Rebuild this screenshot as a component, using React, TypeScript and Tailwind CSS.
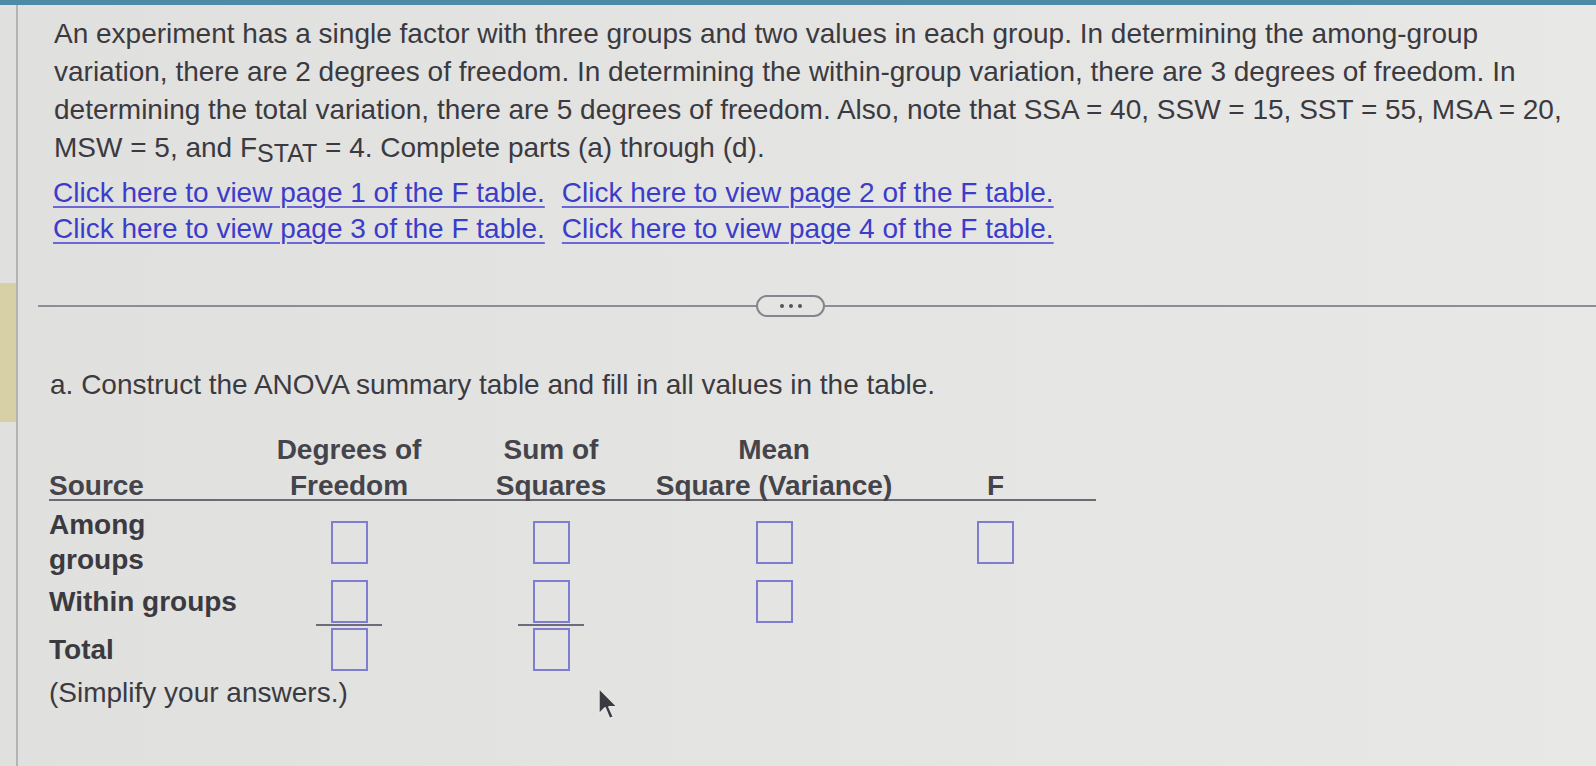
import React from "react";

// small answer box used in the ANOVA table
const AnswerBox = () => (
  <span className="block w-[37px] h-[43px] border-2 border-[#7f7dd2]" />
);

const FractionCell = () => (
  <div className="flex h-full flex-col items-center justify-end">
    <AnswerBox />
    <span className="mt-[1px] block h-[2px] w-[66px] bg-[#6f6b78]" />
  </div>
);

const HeaderCell = ({ top, bottom }: { top: string; bottom: string }) => (
  <div className="text-center">
    <div className="leading-[36px]">{top}</div>
    <div className="mt-[5px] leading-[26px]">{bottom}</div>
  </div>
);

const App: React.FC = () => {
  return (
    <div
      className="relative flex h-[766px] w-full flex-col overflow-hidden bg-linear-to-r from-[#e0e0de] to-[#e8e8e6] text-[#3b3a41]"
      style={{ fontFamily: '"Liberation Sans", Arial, sans-serif' }}
    >
      {/* top bar */}
      <div className="h-[5px] w-full bg-[#4d8aa6]" />

      <div className="flex flex-1">
        {/* left gutter */}
        <div className="flex w-[16px] flex-col">
          <div className="h-[278px]" />
          <div className="h-[139px] bg-[#d7cfa6]" />
        </div>
        <div className="w-[2px] bg-[#b4b4b6]" />

        {/* content */}
        <div className="flex-1">
          <p className="mt-[10px] pl-[36px] text-[28px] leading-[38px] whitespace-nowrap">
            An experiment has a single factor with three groups and two values in each group. In determining the among-group
            <br />
            variation, there are 2 degrees of freedom. In determining the within-group variation, there are 3 degrees of freedom. In
            <br />
            determining the total variation, there are 5 degrees of freedom. Also, note that SSA = 40, SSW = 15, SST = 55, MSA = 20,
            <br />
            MSW = 5, and F
            <sub className="relative top-[5px] text-[25px]">STAT</sub> = 4. Complete parts (a) through (d).
          </p>

          <div className="mt-[8px] pl-[35px] text-[28px] leading-[36px] text-[#3c3ccb]">
            <div className="flex gap-[17px]">
              <a className="underline decoration-2 underline-offset-4 decoration-[#6b68d6]">
                Click here to view page 1 of the F table.
              </a>
              <a className="underline decoration-2 underline-offset-4 decoration-[#6b68d6]">
                Click here to view page 2 of the F table.
              </a>
            </div>
            <div className="flex gap-[17px]">
              <a className="underline decoration-2 underline-offset-4 decoration-[#6b68d6]">
                Click here to view page 3 of the F table.
              </a>
              <a className="underline decoration-2 underline-offset-4 decoration-[#6b68d6]">
                Click here to view page 4 of the F table.
              </a>
            </div>
          </div>

          {/* separator with more button */}
          <div className="mt-[48px] flex items-center pl-[20px]">
            <div className="h-[2px] w-[718px] bg-[#8d8c99]" />
            <button className="flex h-[22px] w-[69px] items-center justify-center gap-[5px] rounded-full border-2 border-[#85848f]">
              <span className="h-[4px] w-[4px] rounded-full bg-[#55545c]" />
              <span className="h-[4px] w-[4px] rounded-full bg-[#55545c]" />
              <span className="h-[4px] w-[4px] rounded-full bg-[#55545c]" />
            </button>
            <div className="h-[2px] flex-1 bg-[#8d8c99]" />
          </div>

          <p className="mt-[50px] pl-[32px] text-[28px] leading-[36px]">
            a. Construct the ANOVA summary table and fill in all values in the table.
          </p>

          {/* ANOVA table */}
          <div className="mt-[29px] ml-[31px] w-[1047px] text-[28px]">
            <div className="grid grid-cols-[200px_200px_204px_242px_201px] items-end border-b-2 border-[#6c6a74] font-bold text-[#45444b]">
              <div className="leading-[26px]">Source</div>
              <HeaderCell top="Degrees of" bottom="Freedom" />
              <HeaderCell top="Sum of" bottom="Squares" />
              <HeaderCell top="Mean" bottom="Square (Variance)" />
              <div className="text-center leading-[26px]">F</div>
            </div>

            <div className="grid grid-cols-[200px_200px_204px_242px_201px] items-center pt-[6px] font-bold leading-[35px]">
              <div>
                Among
                <br />
                groups
              </div>
              <div className="flex justify-center"><AnswerBox /></div>
              <div className="flex justify-center"><AnswerBox /></div>
              <div className="flex justify-center"><AnswerBox /></div>
              <div className="flex justify-center"><AnswerBox /></div>
            </div>

            <div className="grid h-[49px] grid-cols-[200px_200px_204px_242px_201px] items-center font-bold leading-[35px]">
              <div>Within groups</div>
              <FractionCell />
              <FractionCell />
              <div className="flex justify-center"><AnswerBox /></div>
              <div />
            </div>

            <div className="grid h-[47px] grid-cols-[200px_200px_204px_242px_201px] items-center font-bold leading-[35px]">
              <div>Total</div>
              <div className="flex justify-center"><AnswerBox /></div>
              <div className="flex justify-center"><AnswerBox /></div>
              <div />
              <div />
            </div>

            <p className="mt-[2px] leading-[36px]">(Simplify your answers.)</p>
          </div>
        </div>
      </div>

      {/* mouse pointer */}
      <svg
        className="absolute left-[596px] top-[686px]"
        width="26"
        height="36"
        viewBox="0 0 22 32"
      >
        <path
          d="M2 2 L2 25 L7.5 19.5 L11.5 29 L15 27.5 L11 18.5 L18.5 18.5 Z"
          fill="#3a3a40"
          stroke="#e6e6e6"
          strokeWidth="1.5"
          strokeLinejoin="round"
        />
      </svg>
    </div>
  );
};

export default App;
